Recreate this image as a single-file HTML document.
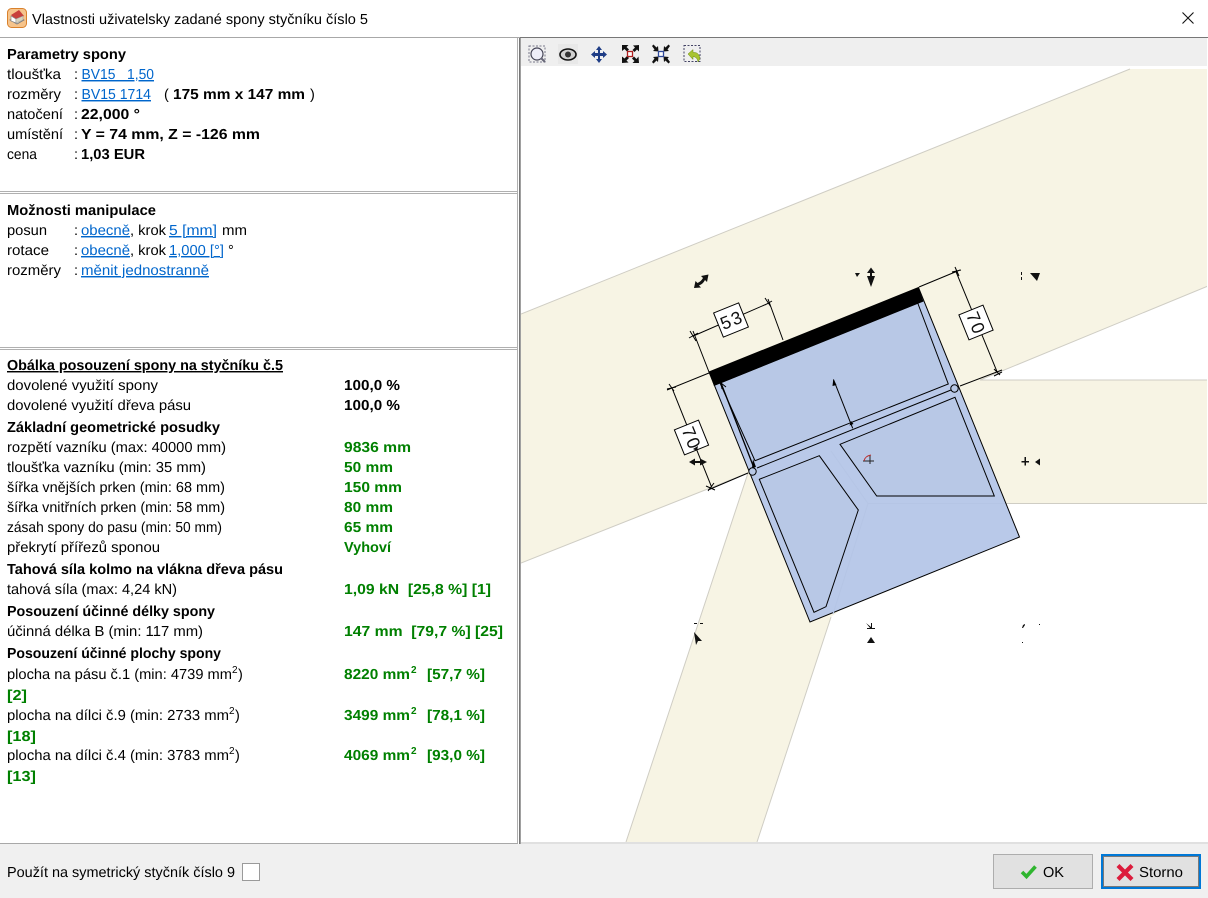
<!DOCTYPE html>
<html lang="cs"><head><meta charset="utf-8"><title>Vlastnosti</title>
<style>
html,body{margin:0;padding:0;background:#fff;width:1208px;height:898px;overflow:hidden}
svg{display:block}
text{font-family:"Liberation Sans",sans-serif;font-size:14.5px;fill:#000;white-space:pre;text-rendering:geometricPrecision}
.b{font-weight:bold}
.g{font-weight:bold;fill:#008000}
.l{fill:#0066cc;text-decoration:underline}
.u{text-decoration:underline}
.s{font-size:10px}
.d{font-size:18px;fill:#111;letter-spacing:1.5px}
</style></head><body>
<svg xmlns="http://www.w3.org/2000/svg" width="1208" height="898" viewBox="0 0 1208 898">
<rect width="1208" height="898" fill="#fff"/>

<!-- title bar -->
<g>
<rect x="7.5" y="8.5" width="19" height="19" rx="4" fill="#f6c48c" stroke="#d9812c"/>
<path d="M10 20l8-3 6 3-7 4z" fill="#e8e4d8" stroke="#777" stroke-width=".8"/>
<path d="M11 15l8-5 5 6-8 4z" fill="#c8403c"/>
<path d="M11 16v5l5 2v-4z" fill="#fff" stroke="#888" stroke-width=".7"/>
<path d="M16 19l7-3v4l-7 3z" fill="#d8d2bc" stroke="#999" stroke-width=".5"/>
</g>
<text x="32" y="24" textLength="336" lengthAdjust="spacingAndGlyphs">Vlastnosti uživatelsky zadané spony styčníku číslo 5</text>
<path d="M1182.5 12.5l11 11M1193.5 12.5l-11 11" stroke="#111" stroke-width="1.1" fill="none"/>
<rect x="0" y="37" width="1208" height="1" fill="#a8a8a8"/>
<rect x="520" y="37" width="688" height="1" fill="#777"/>

<!-- canvas -->
<rect x="521" y="38" width="686" height="28" fill="#efefef"/>
<rect x="521" y="66" width="686" height="776" fill="#fff"/>
<svg x="521" y="66" width="686" height="776" viewBox="521 66 686 776">
<polygon points="521,314 1130,69 1208,69 1208,286 980,380 1208,380 1208,503.5 1005,503.5 831,617 757,842 626,842 748,473 521,563" fill="#f7f4e4"/>
<polygon points="980,503.5 1208,503.5 1208,842 757,842 831,617" fill="#fff"/>
<path d="M521 314L1130 69M521 563L748 473M748 473L626 842M980 380L1208 286M980 380H1208M1005 503.5H1208M831 617L757 842" stroke="#cfcdc4" stroke-width="1" fill="none"/>

<!-- plate -->
<polygon points="709,372 918.5,287.5 1019.5,537 810,622" fill="#b9c9e9" stroke="#000" stroke-width="1"/>
<path d="M868 503.5H1005M868 503.5L831 451M868 503.5L833 614" stroke="#b5c5e5" stroke-width="1" fill="none"/>
<g fill="#b8c8e6" stroke="#000" stroke-width="1">
<polygon points="720,383 917.7,303 948.3,384 755,460.7"/>
<polygon points="955,397.3 994.3,496 876.7,496 840,444.3"/>
<polygon points="819.3,455.7 858.3,510 826,606.7 814,612.3 759.3,479.3"/>
</g>
<path d="M757 468L951 390" stroke="#000" fill="none"/>
<polygon points="709,372 918.5,287.5 923.5,301.5 714,386" fill="#000"/>
<circle cx="954.5" cy="388.5" r="3.7" fill="#b8c8e6" stroke="#000"/>
<circle cx="752.5" cy="471.5" r="3.7" fill="#b8c8e6" stroke="#000"/>

<!-- dimension lines -->
<g stroke="#000" stroke-width="1" fill="none">
<path d="M693 331L709 372M768 299L783 340M693.3 336L768.3 303.3M689 338l9-5M690 331l6 10M765 305l7-4M765 298l6 9"/>
<path d="M919 287L960 270M956 271.7L997.3 372.3M960 386L1002 370M952 272l9-2M955 267l4 9M994 376l8-4M994 369l6 6"/>
<path d="M667 390L709 373M671.7 387.3L711.7 487.3M708 490L748 473M667 389l9-2M669 384l5 7M706 486l9 4M708 491l6-8"/>
</g>
<g fill="#fff" stroke="#000" stroke-width="1">
<rect x="717.5" y="307" width="27" height="26" transform="rotate(-22 731 320)"/>
<rect x="963" y="309" width="26" height="27" transform="rotate(-22 976 322.5)"/>
<rect x="678.5" y="424" width="26" height="27" transform="rotate(-22 691.5 437.5)"/>
</g>
<text class="d" x="731.7" y="326.5" text-anchor="middle" transform="rotate(-22 731 320)">53</text>
<text class="d" x="976.7" y="329" text-anchor="middle" transform="rotate(68 976 322.5)">70</text>
<text class="d" x="692.2" y="444" text-anchor="middle" transform="rotate(68 691.5 437.5)">70</text>

<!-- arrows -->
<g stroke="#000" fill="none">
<path d="M721 383L754 468" stroke-width="1.3"/>
<path d="M721 383l1 6M721 383l5 4"/>
<path d="M833.5 379.5L852.7 428.3"/>
</g>
<polygon points="833.3,379 832.5,386 836.5,385" fill="#000"/>
<polygon points="851,421 853.5,424 849.5,425.5" fill="#000"/>
<polygon points="753,459 756,467 752,468" fill="#000"/>

<!-- center marker -->
<path d="M863 461h11M870 455v9" stroke="#222" stroke-width="1"/>
<path d="M864 461q1-5 7-6" stroke="#b33" fill="none"/>

<!-- handles -->
<g fill="#111" stroke="none">
<path d="M694 288l7-.5-2-2q4-1.500 6-5.500l2 2 1.500-7.500-7.500 1.500 2 2q-2 3.500-5.500 5l-2-2z"/>
<polygon points="855,273 860,273 857,277"/>
<path d="M871 267.500l4 5.500h-3v3h3l-4 11-4-11h3v-3h-3z"/>
<polygon points="1030,273 1040,273 1037,281"/>
<path d="M1021 272h1v3h-1zM1021 277h1v3h-1z"/>
<path d="M689 462l6-3.500v2.500h5v-2.500l7 3.500-7 3.500v-2.500h-5v2.500z"/>
<polygon points="693,449 698,446 697,451"/>
<path d="M1024.500 457h1.500v4h3v1.500h-3v3h-1.500v-3h-3v-1.500h3z"/>
<polygon points="1035,462 1040,458.500 1040,465.500"/>
<path d="M694 623h3v1h-3zM700 623h3v1h-3z"/>
<polygon points="694,632 702,641 698,641 696,645"/>
<path d="M866 623l5 4v-4h1v5h3v1h-8v-1h3z"/>
<polygon points="871,637 875,643 867,643"/>
<path d="M1022 628l1-3 2-1v1l-2 3zM1039 624h1v1h-1zM1022 642h1v1h-1z"/>
</g>
</svg>

<!-- toolbar icons -->
<g>
<rect x="529" y="46" width="16" height="16" fill="none" stroke="#778" stroke-dasharray="2 1.500"/>
<circle cx="537" cy="54" r="6" fill="#eeeef8" stroke="#445" stroke-width="1.200"/>
<path d="M541 58l4 4" stroke="#667" stroke-width="2"/>
<rect x="558" y="44" width="20" height="20" fill="#e8e8e8"/>
<ellipse cx="568" cy="54.500" rx="8" ry="5.500" fill="#d0d0d0" stroke="#111" stroke-width="1.600"/>
<circle cx="568" cy="54.500" r="3" fill="#333"/>
<path d="M599 46l3 4h-2v3h3v-2l4 3.500-4 3.500v-2h-3v3h2l-3 4-3-4h2v-3h-3v2l-4-3.500 4-3.500v2h3v-3h-2z" fill="#1f3d86"/>
<g fill="#111">
<path d="M622 45h6.500l-2 2 2.500 2.500-2 2-2.500-2.500-2.500 2zM639 45v6.500l-2-2-2.500 2.500-2-2 2.500-2.500-2-2zM622 63v-6.500l2.500 2 2.500-2.500 2 2-2.500 2.500 2 2zM639 63h-6.500l2-2-2.500-2.500 2-2 2.500 2.500 2-2.500z"/>
<path d="M652 46l1.500-1.500 3 3 1.500-1.500.5 5.500-5.500-.5 1.500-1.500zM670 46l-1.500-1.500-3 3-1.500-1.500-.5 5.500 5.500-.5-1.500-1.500zM652 62l1.500 1.500 3-3 1.500 1.500.5-5.500-5.500.5 1.500 1.500zM670 62l-1.500 1.500-3-3-1.500 1.500-.5-5.500 5.500.5-1.500 1.500z"/>
</g>
<rect x="627.500" y="51.500" width="5" height="5" fill="#fff" stroke="#b02020" stroke-width="1.300"/>
<rect x="658.500" y="51.500" width="5" height="5" fill="#fff" stroke="#304a9a" stroke-width="1.300"/>
<rect x="684" y="45.500" width="16" height="16" fill="none" stroke="#446" stroke-dasharray="2 1.500"/>
<path d="M688 54l5-4.500v3h2q4 .5 5 6l-2 3.500q-.5-5-5-5.500v3z" fill="#a8c430" stroke="#6a8a10" stroke-width=".5"/>
</g>

<!-- splitters -->
<rect x="0" y="191" width="518" height="1" fill="#b0b0b0"/>
<rect x="0" y="193" width="518" height="1" fill="#b0b0b0"/>
<rect x="0" y="347" width="518" height="1" fill="#b0b0b0"/>
<rect x="0" y="349" width="518" height="1" fill="#b0b0b0"/>
<rect x="517" y="38" width="1" height="806" fill="#b0b0b0"/>
<rect x="519" y="38" width="1" height="806" fill="#777"/>
<rect x="520" y="38" width="1" height="806" fill="#a0a0a0"/>

<!-- parametry -->
<text class="b" x="7" y="59" textLength="119" lengthAdjust="spacingAndGlyphs">Parametry spony</text>
<text x="7" y="79" textLength="54" lengthAdjust="spacingAndGlyphs">tloušťka</text><text x="74" y="79">:</text><text class="l" x="81.500" y="79" textLength="72.500" lengthAdjust="spacingAndGlyphs">BV15   1,50</text>
<text x="7" y="99" textLength="54" lengthAdjust="spacingAndGlyphs">rozměry</text><text x="74" y="99">:</text><text class="l" x="81.500" y="99" textLength="69.500" lengthAdjust="spacingAndGlyphs">BV15 1714</text><text x="164" y="99">(</text><text class="b" x="173" y="99" textLength="132" lengthAdjust="spacingAndGlyphs">175 mm x 147 mm</text><text x="310" y="99">)</text>
<text x="7" y="119" textLength="56" lengthAdjust="spacingAndGlyphs">natočení</text><text x="74" y="119">:</text><text class="b" x="81" y="119" textLength="59" lengthAdjust="spacingAndGlyphs">22,000 °</text>
<text x="7" y="139" textLength="56" lengthAdjust="spacingAndGlyphs">umístění</text><text x="74" y="139">:</text><text class="b" x="81" y="139" textLength="179" lengthAdjust="spacingAndGlyphs">Y = 74 mm, Z = -126 mm</text>
<text x="7" y="159" textLength="30" lengthAdjust="spacingAndGlyphs">cena</text><text x="74" y="159">:</text><text class="b" x="81" y="159" textLength="64" lengthAdjust="spacingAndGlyphs">1,03 EUR</text>

<!-- manipulace -->
<text class="b" x="7" y="215" textLength="149" lengthAdjust="spacingAndGlyphs">Možnosti manipulace</text>
<text x="7" y="235" textLength="40" lengthAdjust="spacingAndGlyphs">posun</text><text x="74" y="235">:</text><text class="l" x="81" y="235" textLength="49" lengthAdjust="spacingAndGlyphs">obecně</text><text x="130" y="235" textLength="36" lengthAdjust="spacingAndGlyphs">, krok</text><text class="l" x="169" y="235" textLength="48" lengthAdjust="spacingAndGlyphs">5 [mm]</text><text x="222" y="235" textLength="25" lengthAdjust="spacingAndGlyphs">mm</text>
<text x="7" y="255" textLength="42" lengthAdjust="spacingAndGlyphs">rotace</text><text x="74" y="255">:</text><text class="l" x="81" y="255" textLength="49" lengthAdjust="spacingAndGlyphs">obecně</text><text x="130" y="255" textLength="36" lengthAdjust="spacingAndGlyphs">, krok</text><text class="l" x="169" y="255" textLength="55" lengthAdjust="spacingAndGlyphs">1,000 [°]</text><text x="228" y="255">°</text>
<text x="7" y="275" textLength="54" lengthAdjust="spacingAndGlyphs">rozměry</text><text x="74" y="275">:</text><text class="l" x="81" y="275" textLength="128" lengthAdjust="spacingAndGlyphs">měnit jednostranně</text>

<!-- obalka -->
<text class="b u" x="7" y="370" textLength="276" lengthAdjust="spacingAndGlyphs">Obálka posouzení spony na styčníku č.5</text>
<text x="7" y="390" textLength="151" lengthAdjust="spacingAndGlyphs">dovolené využití spony</text><text class="b" x="344" y="390" textLength="56" lengthAdjust="spacingAndGlyphs">100,0 %</text>
<text x="7" y="410" textLength="184" lengthAdjust="spacingAndGlyphs">dovolené využití dřeva pásu</text><text class="b" x="344" y="410" textLength="56" lengthAdjust="spacingAndGlyphs">100,0 %</text>
<text class="b" x="7" y="432" textLength="213" lengthAdjust="spacingAndGlyphs">Základní geometrické posudky</text>
<text x="7" y="452" textLength="219" lengthAdjust="spacingAndGlyphs">rozpětí vazníku (max: 40000 mm)</text><text class="g" x="344" y="452" textLength="67" lengthAdjust="spacingAndGlyphs">9836 mm</text>
<text x="7" y="472" textLength="199" lengthAdjust="spacingAndGlyphs">tloušťka vazníku (min: 35 mm)</text><text class="g" x="344" y="472" textLength="49" lengthAdjust="spacingAndGlyphs">50 mm</text>
<text x="7" y="492" textLength="218" lengthAdjust="spacingAndGlyphs">šířka vnějších prken (min: 68 mm)</text><text class="g" x="344" y="492" textLength="58" lengthAdjust="spacingAndGlyphs">150 mm</text>
<text x="7" y="512" textLength="218" lengthAdjust="spacingAndGlyphs">šířka vnitřních prken (min: 58 mm)</text><text class="g" x="344" y="512" textLength="49" lengthAdjust="spacingAndGlyphs">80 mm</text>
<text x="7" y="532" textLength="215" lengthAdjust="spacingAndGlyphs">zásah spony do pasu (min: 50 mm)</text><text class="g" x="344" y="532" textLength="49" lengthAdjust="spacingAndGlyphs">65 mm</text>
<text x="7" y="552" textLength="153" lengthAdjust="spacingAndGlyphs">překrytí přířezů sponou</text><text class="g" x="344" y="552" textLength="47" lengthAdjust="spacingAndGlyphs">Vyhoví</text>
<text class="b" x="7" y="574" textLength="276" lengthAdjust="spacingAndGlyphs">Tahová síla kolmo na vlákna dřeva pásu</text>
<text x="7" y="594" textLength="170" lengthAdjust="spacingAndGlyphs">tahová síla (max: 4,24 kN)</text><text class="g" x="344" y="594" textLength="147" lengthAdjust="spacingAndGlyphs">1,09 kN  [25,8 %] [1]</text>
<text class="b" x="7" y="616" textLength="208" lengthAdjust="spacingAndGlyphs">Posouzení účinné délky spony</text>
<text x="7" y="636" textLength="196" lengthAdjust="spacingAndGlyphs">účinná délka B (min: 117 mm)</text><text class="g" x="344" y="636" textLength="159" lengthAdjust="spacingAndGlyphs">147 mm  [79,7 %] [25]</text>
<text class="b" x="7" y="658" textLength="214" lengthAdjust="spacingAndGlyphs">Posouzení účinné plochy spony</text>

<text x="7" y="679" textLength="225" lengthAdjust="spacingAndGlyphs">plocha na pásu č.1 (min: 4739 mm</text><text class="s" x="232" y="673">2</text><text x="238" y="679">)</text>
<text class="g" x="344" y="679" textLength="66" lengthAdjust="spacingAndGlyphs">8220 mm</text><text class="g s" x="411" y="673">2</text><text class="g" x="427" y="679" textLength="58" lengthAdjust="spacingAndGlyphs">[57,7 %]</text>
<text class="g" x="7" y="700" textLength="20" lengthAdjust="spacingAndGlyphs">[2]</text>
<text x="7" y="720" textLength="222" lengthAdjust="spacingAndGlyphs">plocha na dílci č.9 (min: 2733 mm</text><text class="s" x="229" y="714">2</text><text x="235" y="720">)</text>
<text class="g" x="344" y="720" textLength="66" lengthAdjust="spacingAndGlyphs">3499 mm</text><text class="g s" x="411" y="714">2</text><text class="g" x="427" y="720" textLength="58" lengthAdjust="spacingAndGlyphs">[78,1 %]</text>
<text class="g" x="7" y="741" textLength="29" lengthAdjust="spacingAndGlyphs">[18]</text>
<text x="7" y="760" textLength="222" lengthAdjust="spacingAndGlyphs">plocha na dílci č.4 (min: 3783 mm</text><text class="s" x="229" y="754">2</text><text x="235" y="760">)</text>
<text class="g" x="344" y="760" textLength="66" lengthAdjust="spacingAndGlyphs">4069 mm</text><text class="g s" x="411" y="754">2</text><text class="g" x="427" y="760" textLength="58" lengthAdjust="spacingAndGlyphs">[93,0 %]</text>
<text class="g" x="7" y="781" textLength="29" lengthAdjust="spacingAndGlyphs">[13]</text>

<!-- bottom bar -->
<rect x="0" y="844" width="1208" height="54" fill="#f0f0f0"/>
<rect x="0" y="843" width="518" height="1" fill="#a8a8a8"/>
<rect x="521" y="842" width="687" height="2" fill="#e0e0e0"/>
<text x="7" y="877" textLength="228" lengthAdjust="spacingAndGlyphs">Použít na symetrický styčník číslo 9</text>
<rect x="242.500" y="863.500" width="17" height="17" fill="#fff" stroke="#9a9a9a"/>

<rect x="993.500" y="854.500" width="99" height="34" fill="#e1e1e1" stroke="#adadad"/>
<path d="M1022 872l4.500 4.500 9-10" stroke="#2fb52f" stroke-width="3.600" fill="none"/>
<text x="1043" y="877" textLength="21" lengthAdjust="spacingAndGlyphs">OK</text>

<rect x="1102" y="855" width="98" height="33" fill="#e1e1e1" stroke="#0078d7" stroke-width="2"/>
<rect x="1103.500" y="856.500" width="95" height="30" fill="none" stroke="#111" stroke-width="1" stroke-dasharray="1 1"/>
<path d="M1118 865.500l14 14M1132 865.500l-14 14" stroke="#dc1c3c" stroke-width="4.200" fill="none"/>
<text x="1139" y="877" textLength="44" lengthAdjust="spacingAndGlyphs">Storno</text>
</svg>
</body></html>
